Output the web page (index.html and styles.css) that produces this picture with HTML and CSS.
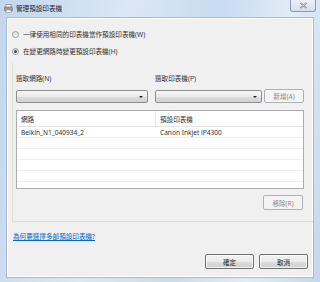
FILE: index.html
```html
<!DOCTYPE html>
<html lang="zh-Hant">
<head>
    <meta charset="UTF-8">
    <title>管理預設印表機</title>
    <link rel="stylesheet" href="styles.css">
</head>
<body>
    <div class="window">
        <div class="titlebar">
            <svg class="app-icon" width="9" height="9" viewBox="0 0 9 9">
                <rect x="2" y="0.5" width="5" height="3" fill="#fff" stroke="#8a8a8a" stroke-width="0.8"/>
                <rect x="0.5" y="3" width="8" height="4" rx="0.8" fill="#9a9a9a" stroke="#6e6e6e" stroke-width="0.6"/>
                <rect x="2" y="6" width="5" height="2.5" fill="#fff" stroke="#8a8a8a" stroke-width="0.6"/>
            </svg>
            <span class="title">管理預設印表機</span>
            <div class="close">
                <svg width="9" height="7" viewBox="0 0 9 7">
                    <path d="M1.5 0.8 L7.5 6.2 M7.5 0.8 L1.5 6.2" stroke="#7b8593" stroke-width="1.6" fill="none"/>
                    <path d="M1.5 0.8 L7.5 6.2 M7.5 0.8 L1.5 6.2" stroke="#f4f6f8" stroke-width="0.6" fill="none"/>
                </svg>
            </div>
        </div>

        <div class="client">
            <div class="radio-row"><span class="radio"></span>一律使用相同的印表機當作預設印表機(W)</div>
            <div class="radio-row second"><span class="radio checked"></span>在變更網路時變更預設印表機(H)</div>

            <div class="group">
                <div class="pickers">
                    <div class="picker network">
                        <div class="label">選取網路(N)</div>
                        <div class="combo"><span class="arrow"></span></div>
                    </div>
                    <div class="picker printer">
                        <div class="label">選取印表機(P)</div>
                        <div class="combo-row">
                            <div class="combo"><span class="arrow"></span></div>
                            <div class="btn small disabled">新增(A)</div>
                        </div>
                    </div>
                </div>

                <div class="list">
                    <div class="list-row head">
                        <div class="cell first">網路</div>
                        <div class="cell">預設印表機</div>
                    </div>
                    <div class="list-row">
                        <div class="cell first">Belkin_N1_040934_2</div>
                        <div class="cell">Canon Inkjet iP4300</div>
                    </div>
                    <div class="list-row"></div>
                    <div class="list-row"></div>
                    <div class="list-row"></div>
                    <div class="list-row"></div>
                    <div class="list-row"></div>
                </div>

                <div class="remove-row">
                    <div class="btn small disabled">移除(R)</div>
                </div>
            </div>

            <a class="help" href="#">為何要選擇多部預設印表機?</a>

            <div class="actions">
                <div class="btn">確定</div>
                <div class="btn">取消</div>
            </div>
        </div>
    </div>
</body>
</html>
```

FILE: styles.css
```css
* {
    box-sizing: border-box;
}
body {
    margin: 0;
    font-family: "Noto Sans", "Noto Sans CJK TC", sans-serif;
    font-size: 6.6px;
    color: #1e1e1e;
    background: #d6e3f2;
}
.window {
    width: 320px;
    height: 282px;
    padding: 0 6px 4px 6px;
    display: flex;
    flex-direction: column;
    background: linear-gradient(100deg, #c2d6ee 0%, #dbe7f5 35%, #c9dbf0 60%, #e2ecf7 80%, #c4d7ee 100%);
}
.titlebar {
    height: 17px;
    display: flex;
    align-items: flex-start;
    margin: 0 -1px 0 -1px;
}
.app-icon {
    margin: 4px 0 0 -1px;
}
.title {
    margin: 4px 0 0 3px;
    line-height: 9px;
    color: #222;
}
.close {
    margin-left: auto;
    margin-right: -1px;
    width: 26px;
    height: 12px;
    border: 1px solid #8a9bb2;
    border-top: none;
    border-radius: 0 0 3px 3px;
    background: linear-gradient(#edf2f9, #d3dfed);
    display: flex;
    align-items: center;
    justify-content: center;
}

.client {
    flex: 1;
    background: #f0f0f0;
    border: 1px solid #a9bcd3;
    box-shadow: inset 0 0 0 1px #ffffff;
    display: flex;
    flex-direction: column;
}
.radio-row {
    height: 12px;
    display: flex;
    align-items: center;
    padding-left: 5px;
    margin-top: 10px;
    color: #333;
}
.radio-row.second {
    margin-top: 5px;
}
.radio {
    width: 7px;
    height: 7px;
    border-radius: 50%;
    border: 1px solid #9a9a9a;
    background: linear-gradient(#dcdcdc, #ffffff);
    margin-right: 4px;
    display: flex;
    align-items: center;
    justify-content: center;
}
.radio.checked::after {
    content: "";
    width: 3px;
    height: 3px;
    border-radius: 50%;
    background: #2b4f7c;
}

.group {
    margin: 6px 0 0 5px;
    padding: 11px 9px 11px 3px;
    border-left: 1px solid #dcdcdc;
    border-bottom: 1px solid #dcdcdc;
}
.pickers {
    display: flex;
    gap: 7px;
}
.picker.network {
    width: 132px;
}
.picker.printer {
    flex: 1;
}
.label {
    height: 10px;
    line-height: 10px;
    color: #333;
}
.combo {
    margin-top: 6px;
    height: 13px;
    border: 1px solid #8e8f8f;
    border-radius: 2px;
    background: linear-gradient(#f6f6f6 0%, #ebebeb 50%, #dddddd 51%, #d2d2d2 100%);
    display: flex;
    align-items: center;
    justify-content: flex-end;
    padding-right: 4px;
}
.arrow {
    width: 0;
    height: 0;
    border-left: 2px solid transparent;
    border-right: 2px solid transparent;
    border-top: 2px solid #222;
}
.combo-row {
    display: flex;
    align-items: flex-end;
    gap: 2px;
}
.combo-row .combo {
    flex: 1;
}
.btn {
    width: 49px;
    height: 15px;
    border: 1px solid #707070;
    border-radius: 2px;
    background: linear-gradient(#f2f2f2 0%, #ebebeb 50%, #dddddd 51%, #cfcfcf 100%);
    box-shadow: inset 0 0 0 1px rgba(255, 255, 255, 0.7);
    display: flex;
    align-items: center;
    justify-content: center;
    color: #222;
}
.btn.small {
    width: 40px;
    height: 14px;
}
.btn.disabled {
    border-color: #adb2b5;
    background: #f4f4f4;
    color: #8a8a8a;
    box-shadow: none;
}

.list {
    margin-top: 7px;
    height: 79px;
    overflow: hidden;
    background: #fff;
    border: 1px solid #abadb3;
}
.list-row {
    height: 11px;
    border-bottom: 1px solid #f0f0f0;
    display: flex;
    align-items: center;
}
.list-row.head {
    height: 16px;
    border-bottom: 1px solid #e5e5e5;
    align-items: stretch;
}
.cell {
    display: flex;
    align-items: center;
    padding-left: 4px;
    color: #333;
}
.cell.first {
    width: 139px;
}
.head .cell.first {
    border-right: 1px solid #e5e5e5;
}
.remove-row {
    display: flex;
    justify-content: flex-end;
    margin-top: 6px;
    padding-right: 1px;
}
.remove-row .btn {
    height: 15px;
}

.help {
    margin: 10px 0 0 6px;
    height: 10px;
    line-height: 10px;
    color: #0066cc;
    text-decoration: underline;
    align-self: flex-start;
}
.actions {
    display: flex;
    justify-content: flex-end;
    gap: 5px;
    margin-top: 12px;
    padding-right: 5px;
}
```
